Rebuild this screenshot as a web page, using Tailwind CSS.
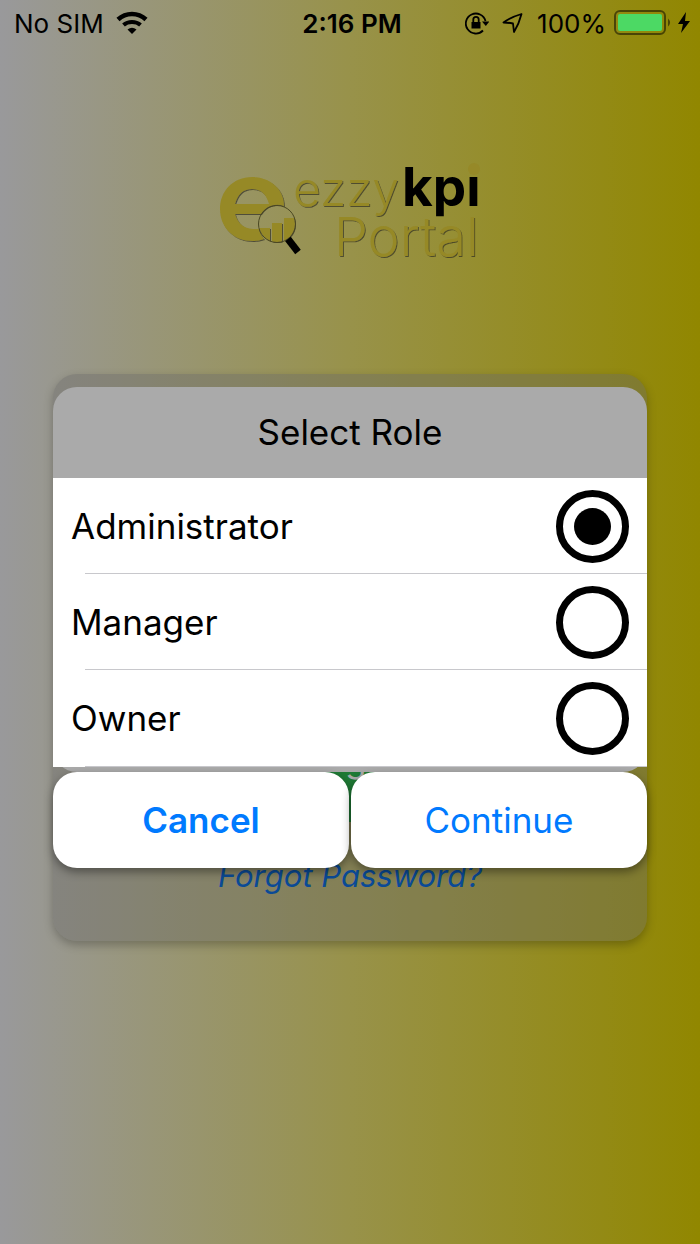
<!DOCTYPE html>
<html lang="en">
<head>
  <meta charset="UTF-8" />
  <meta name="viewport" content="width=device-width, initial-scale=1.0" />
  <title>ezzykpi Portal</title>
  <script src="https://cdn.jsdelivr.net/npm/@tailwindcss/browser@4"></script>
</head>
<body class="font-['Inter',sans-serif] text-black">

  <div class="min-h-screen flex flex-col bg-linear-[90deg,#99999b,#98924a_50%,#918700]">

    <!-- Status bar -->
    <header class="grid grid-cols-3 items-center h-[46px] pl-[14px] pr-[10px] text-[26px]">
      <div class="flex items-center gap-3">
        <span>No SIM</span>
        <svg class="w-8 h-6" viewBox="0 0 32 24" fill="none" stroke="#000" stroke-width="4.500">
          <path d="M2 8.500C10 1 22 1 30 8.500" />
          <path d="M7.500 14C12 10 20 10 24.500 14" stroke-width="4" />
          <path d="M11.500 18.500Q16 15 20.500 18.500L16 23z" fill="#000" stroke="none" />
        </svg>
      </div>
      <div class="text-center font-semibold whitespace-nowrap">2:16 PM</div>
      <div class="flex items-center justify-end gap-2">
        <svg class="w-6 h-6 mr-1 shrink-0" viewBox="0 0 24 24" fill="none" stroke="#000" stroke-width="1.800">
          <path d="M18 19.500A10 10 0 1 1 20.500 10" />
          <path d="M17 10.500h7.500L20.800 15z" fill="#000" stroke="none" />
          <path d="M6.500 11h9v6.500h-9z" fill="#000" stroke="none" />
          <path d="M8.300 11V8.500a2.700 2.700 0 0 1 5.400 0V11" />
        </svg>
        <svg class="w-6 h-6 mr-1 shrink-0" viewBox="0 0 24 24" fill="none" stroke="#000" stroke-width="1.800" stroke-linejoin="round">
          <path d="M20.500 3Q10 6 2.500 11.500Q7 11.500 12 12.500Q12.500 17 13 21Q18 13 20.500 3z" />
        </svg>
        <span>100%</span>
        <svg class="w-[76px] h-7 shrink-0" viewBox="0 0 76 28">
          <rect x="1" y="2" width="50" height="23" rx="5" fill="none" stroke="#000" stroke-opacity=".5" stroke-width="2" />
          <rect x="4" y="5" width="44" height="17" rx="2" fill="#4cd964" />
          <path d="M54 9.500q4 4 0 8z" fill="#000" fill-opacity=".5" />
          <path d="M72 3 64 15h5l-2 9 9-12h-5z" />
        </svg>
      </div>
    </header>

    <!-- Logo -->
    <svg class="self-center mt-[114px] w-[270px] h-[110px]" viewBox="215 160 270 110" role="img" aria-label="ezzykpi Portal">
      <defs>
        <filter id="edge" x="-5%" y="-5%" width="110%" height="110%">
          <feDropShadow dx="1" dy="1" stdDeviation="0.500" flood-color="#222" flood-opacity="0.600" />
        </filter>
        <clipPath id="lens"><circle cx="277" cy="224" r="18" /></clipPath>
      </defs>
      <g filter="url(#edge)" fill="#968928">
        <path fill-rule="evenodd" d="M284 206C284 189 270 177 252 177C233 177 220 191 220 209C220 228 234 241 253 241Q259 241 264 239A19 19 0 0 1 259 229H253Q239 228 235 214H261A19 19 0 0 1 284 206ZM235 204Q239 189 252 189Q265 189 269 204Z" />
        <path clip-path="url(#lens)" d="M258 228h12v18h-12zM272 223h10v22h-10zM284 218h12v24h-12z" />
      </g>
      <circle cx="277" cy="224" r="18.500" fill="none" stroke="#4a4722" />
      <path d="M288 239 298 252" stroke="#000" stroke-width="7" />
      <g filter="url(#edge)" fill="#968928" font-weight="300">
        <text x="293" y="206" font-size="48">ezzy</text>
        <text x="334" y="256" font-size="54">Portal</text>
      </g>
      <text x="402" y="206" font-size="53" font-weight="700">kpi</text>
      <circle cx="474" cy="169" r="6" fill="#968928" />
    </svg>

    <main class="grid items-start mt-[104px] px-[53px]">

      <!-- Login card -->
      <section class="col-start-1 row-start-1 flex flex-col items-center justify-end h-[567px] pb-[45px] rounded-3xl bg-[#666]/40 shadow-[0_4px_10px] shadow-black/25">
        <button class="w-1/2 h-[90px] pb-9 mb-[34px] rounded-3xl bg-[#1f7a35] text-[#aaa] text-[35px]">Login</button>
        <a href="#" class="text-[31px] leading-[40px] italic text-[#0a4a96]">Forgot Password?</a>
      </section>

      <!-- Role dialog -->
      <form class="col-start-1 row-start-1 z-10 mt-[13px] text-[35px]" role="dialog" aria-labelledby="role-title">
        <div class="rounded-3xl bg-[#aaa] pb-[5px]">
          <h1 id="role-title" class="flex items-center justify-center h-[91px]">Select Role</h1>
          <div class="bg-white">
            <label class="flex items-center justify-between h-24 px-[18px]">
              Administrator
              <input type="radio" name="role" checked class="appearance-none size-[73px] rounded-full border-[7px] border-black p-[11px] bg-clip-content checked:bg-black" />
            </label>
            <hr class="ml-8 -mt-px border-[#c8c8cc]" />
            <label class="flex items-center justify-between h-24 px-[18px]">
              Manager
              <input type="radio" name="role" class="appearance-none size-[73px] rounded-full border-[7px] border-black p-[11px] bg-clip-content checked:bg-black" />
            </label>
            <hr class="ml-8 -mt-px border-[#c8c8cc]" />
            <label class="flex items-center justify-between h-24 px-[18px]">
              Owner
              <input type="radio" name="role" class="appearance-none size-[73px] rounded-full border-[7px] border-black p-[11px] bg-clip-content checked:bg-black" />
            </label>
            <hr class="ml-8 border-[#c8c8cc]" />
          </div>
        </div>
        <div class="grid grid-cols-2 gap-[2px] text-[#007aff]">
          <button type="button" class="h-24 rounded-3xl bg-white font-semibold shadow-[0_4px_10px] shadow-black/40">Cancel</button>
          <button type="submit" class="h-24 rounded-3xl bg-white shadow-[0_4px_10px] shadow-black/40">Continue</button>
        </div>
      </form>
    </main>
  </div>

</body>
</html>
